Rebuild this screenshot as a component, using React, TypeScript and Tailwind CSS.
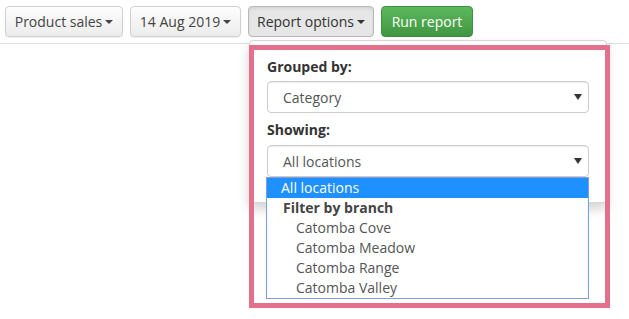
const Caret = () => (
  <span className="ml-[3px] inline-block h-0 w-0 border-x-[4px] border-t-[4px] border-x-transparent border-t-current align-middle" />
);

const ToolbarButton = ({
  label,
  width,
  active = false,
}: {
  label: string;
  width: string;
  active?: boolean;
}) => (
  <button
    className={
      (active
        ? 'flex h-[31px] items-center justify-center rounded-[4px] border border-[#b8b8b8] bg-[#e6e6e6] text-[14px] text-[#333] shadow-[inset_0_2px_3px_rgba(0,0,0,0.08)] '
        : 'flex h-[31px] items-center justify-center rounded-[4px] border border-[#cfcfcf] bg-gradient-to-b from-[#fdfdfd] to-[#ececec] text-[14px] text-[#444] shadow-[0_1px_1px_rgba(0,0,0,0.06)] ') +
      width
    }
  >
    {label}
    <Caret />
  </button>
);

const FakeSelect = ({ value }: { value: string }) => (
  <div className="flex h-[32px] w-full items-center justify-between rounded-[4px] border border-[#cccccc] bg-white pl-[15px] pr-[6px] text-[14px] text-[#555] shadow-[inset_0_1px_1px_rgba(0,0,0,0.075)]">
    <span>{value}</span>
    <span className="inline-block h-0 w-0 border-x-[4px] border-t-[6px] border-x-transparent border-t-[#333]" />
  </div>
);

const BRANCHES = ['Catomba Cove', 'Catomba Meadow', 'Catomba Range', 'Catomba Valley'];

export default function App() {
  return (
    <div className="relative h-[319px] w-full overflow-hidden bg-white font-['Open_Sans',sans-serif]">
      <div className="flex h-[44px] items-start gap-[7px] border-b border-[#dddddd] pl-[5px] pt-[6px]">
        <ToolbarButton label="Product sales" width="w-[118px]" />
        <ToolbarButton label="14 Aug 2019" width="w-[111px]" />
        <div className="relative">
          <ToolbarButton label="Report options" width="w-[126px]" active />

          {/* dropdown panel */}
          <div className="absolute left-[1px] top-[34px] z-10 h-[163px] w-[358px] rounded-[4px] border border-[#d6d6d6] bg-white px-[17px] pt-[16px] shadow-[0_6px_12px_rgba(0,0,0,0.175)]">
            <div className="mb-[4px] text-[14px] font-bold leading-[20px] text-[#333]">Grouped by:</div>
            <FakeSelect value="Category" />
            <div className="mb-[5px] mt-[7px] text-[14px] font-bold leading-[20px] text-[#333]">Showing:</div>
            <FakeSelect value="All locations" />

            {/* open native listbox */}
            <div className="absolute left-[16px] top-[136px] w-[323px] border border-[#7f9ddc] bg-white text-[14px] leading-[20px] text-[#555]">
              <div className="bg-[#1e90ff] pl-[14px] text-white">All locations</div>
              <div className="pl-[16px] font-bold text-[#444]">Filter by branch</div>
              {BRANCHES.map((b) => (
                <div key={b} className="pl-[29px]">
                  {b}
                </div>
              ))}
            </div>
          </div>
        </div>
        <button className="flex h-[31px] w-[92px] items-center justify-center rounded-[4px] border border-[#3e8f3e] bg-gradient-to-b from-[#5cb85c] to-[#419641] text-[14px] text-white">
          Run report
        </button>
      </div>

      {/* highlight annotation */}
      <div className="pointer-events-none absolute left-[249px] top-[45px] z-20 h-[263px] w-[361px] border-[5px] border-[#e4708e]" />
    </div>
  );
}
